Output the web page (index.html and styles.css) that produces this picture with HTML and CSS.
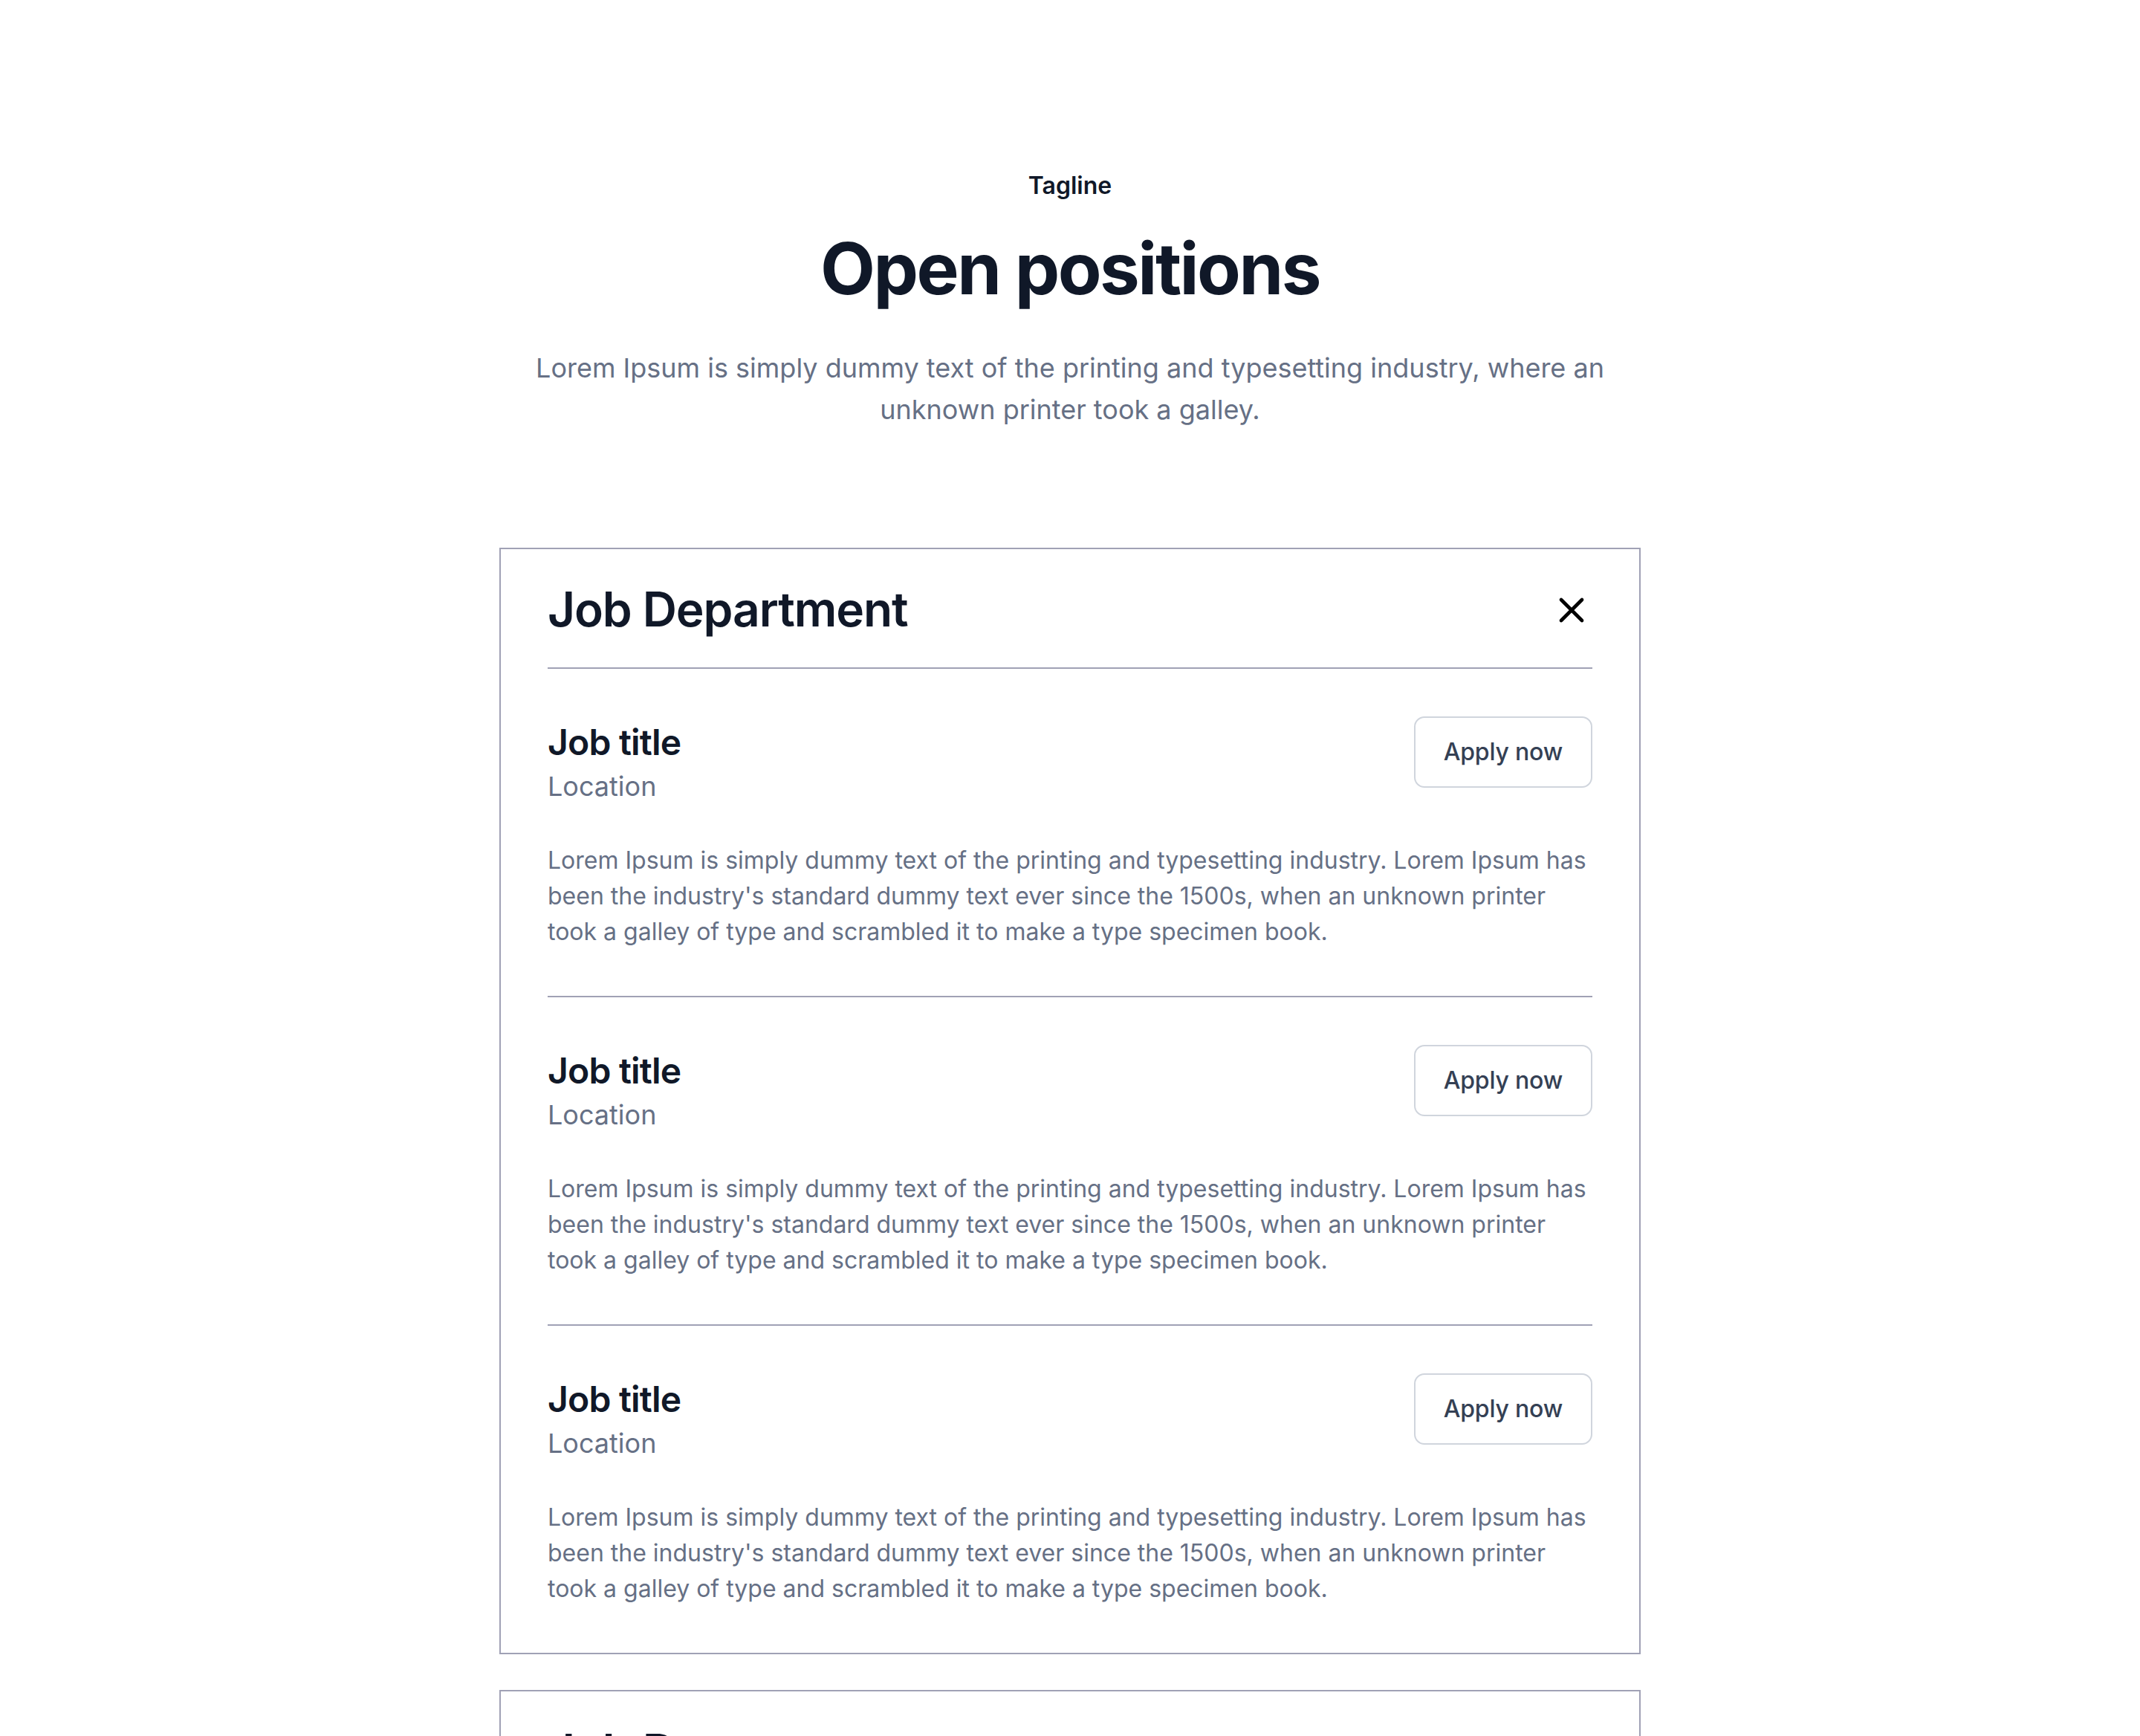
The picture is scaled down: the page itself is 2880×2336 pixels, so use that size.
FILE: index.html
```html
<!DOCTYPE html>
<html lang="en">
<head>
    <meta charset="UTF-8">
    <meta name="viewport" content="width=device-width, initial-scale=1.0">
    <title>Open positions</title>
    <link rel="stylesheet" href="styles.css">
</head>
<body>

    <!-- Intro -->
    <section class="intro">
        <p class="tagline">Tagline</p>
        <h1>Open positions</h1>
        <p class="lead">Lorem Ipsum is simply dummy text of the printing and typesetting industry, where an unknown printer took a galley.</p>
    </section>

    <!-- Departments -->
    <section class="departments">
        <div class="dept">
            <div class="dept-head">
                <h2>Job Department</h2>
                <button class="close" aria-label="Close">
                    <svg viewBox="0 0 24 24" fill="none" stroke="currentColor" stroke-width="2" stroke-linecap="round" stroke-linejoin="round"><path d="M18 6 6 18M6 6l12 12"/></svg>
                </button>
            </div>
            <div class="job">
                <div class="job-top">
                    <div>
                        <h3>Job title</h3>
                        <p class="location">Location</p>
                    </div>
                    <button class="apply">Apply now</button>
                </div>
                <p class="desc">Lorem Ipsum is simply dummy text of the printing and typesetting industry. Lorem Ipsum has been the industry's standard dummy text ever since the 1500s, when an unknown printer took a galley of type and scrambled it to make a type specimen book.</p>
            </div>
            <div class="job">
                <div class="job-top">
                    <div>
                        <h3>Job title</h3>
                        <p class="location">Location</p>
                    </div>
                    <button class="apply">Apply now</button>
                </div>
                <p class="desc">Lorem Ipsum is simply dummy text of the printing and typesetting industry. Lorem Ipsum has been the industry's standard dummy text ever since the 1500s, when an unknown printer took a galley of type and scrambled it to make a type specimen book.</p>
            </div>
            <div class="job">
                <div class="job-top">
                    <div>
                        <h3>Job title</h3>
                        <p class="location">Location</p>
                    </div>
                    <button class="apply">Apply now</button>
                </div>
                <p class="desc">Lorem Ipsum is simply dummy text of the printing and typesetting industry. Lorem Ipsum has been the industry's standard dummy text ever since the 1500s, when an unknown printer took a galley of type and scrambled it to make a type specimen book.</p>
            </div>
        </div>

        <div class="dept">
            <div class="dept-head">
                <h2>Job Department</h2>
                <button class="close" aria-label="Close">
                    <svg viewBox="0 0 24 24" fill="none" stroke="currentColor" stroke-width="2" stroke-linecap="round" stroke-linejoin="round"><path d="M18 6 6 18M6 6l12 12"/></svg>
                </button>
            </div>
            <div class="job">
                <div class="job-top">
                    <div>
                        <h3>Job title</h3>
                        <p class="location">Location</p>
                    </div>
                    <button class="apply">Apply now</button>
                </div>
                <p class="desc">Lorem Ipsum is simply dummy text of the printing and typesetting industry. Lorem Ipsum has been the industry's standard dummy text ever since the 1500s, when an unknown printer took a galley of type and scrambled it to make a type specimen book.</p>
            </div>
        </div>
    </section>

</body>
</html>
```

FILE: styles.css
```css
body {
    font-family: Inter, "Noto Sans", sans-serif;
    margin: 0;
    padding: 0;
    background-color: #fff;
    color: #101828;
}

p, h1, h2, h3 {
    margin: 0;
}

/* Intro */
.intro {
    padding-top: 226px;
    text-align: center;
}

.tagline {
    font-size: 32px;
    line-height: 48px;
    font-weight: 600;
}

.intro h1 {
    margin-top: 30px;
    font-size: 96px;
    line-height: 1.2;
    font-weight: 700;
    letter-spacing: -2.5px;
}

.lead {
    max-width: 1500px;
    margin: 48px auto 0;
    font-size: 36px;
    line-height: 56px;
    color: #667085;
}

/* Afdelingen */
.departments {
    width: 1536px;
    margin: 158px auto 0;
    display: flex;
    flex-direction: column;
    gap: 48px;
}

.dept {
    border: 2px solid #a0a1b5;
    padding: 0 63px;
}

.dept-head {
    display: flex;
    justify-content: space-between;
    align-items: center;
    padding: 43px 0 39px;
    border-bottom: 2px solid #a0a1b5;
}

.dept-head h2 {
    font-size: 64px;
    line-height: 1.2;
    font-weight: 600;
    letter-spacing: -1.1px;
}

.close {
    width: 56px;
    height: 56px;
    padding: 0;
    border: none;
    background: none;
    color: #000;
    cursor: pointer;
}

.close svg {
    display: block;
    width: 56px;
    height: 56px;
}

/* Vacatures */
.job {
    padding: 64px 0 62px;
    border-bottom: 2px solid #a0a1b5;
}

.job:last-child {
    border-bottom: none;
}

.job-top {
    display: flex;
    justify-content: space-between;
    align-items: flex-start;
}

.job h3 {
    font-size: 48px;
    line-height: 70px;
    font-weight: 600;
    letter-spacing: -0.8px;
}

.location {
    font-size: 36px;
    line-height: 48px;
    color: #667085;
}

.apply {
    font-family: inherit;
    font-size: 32px;
    line-height: 48px;
    font-weight: 500;
    letter-spacing: -0.2px;
    color: #344054;
    background-color: #fff;
    border: 2px solid #d0d5dd;
    border-radius: 14px;
    padding: 22px 38px;
    cursor: pointer;
}

.desc {
    margin-top: 52px;
    font-size: 32px;
    line-height: 48px;
    color: #667085;
}
```
